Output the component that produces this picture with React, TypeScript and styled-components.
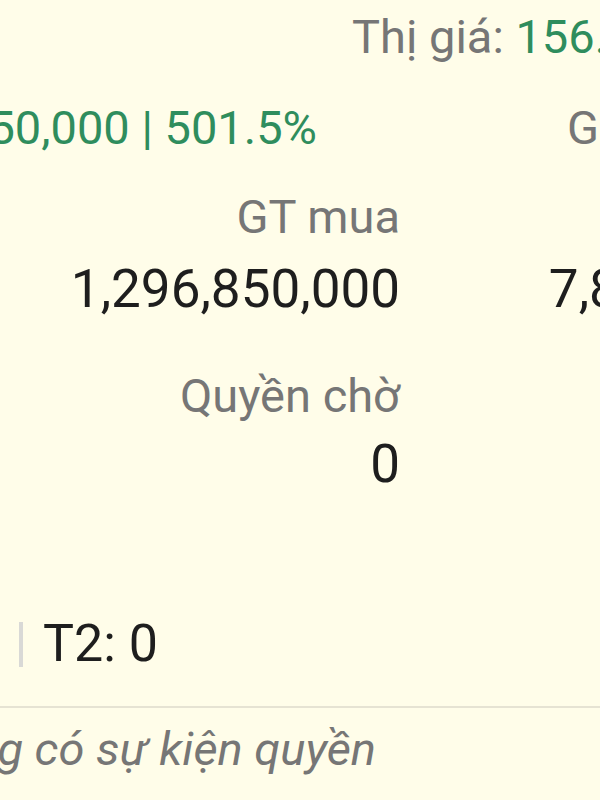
import React, { FC } from "react";
import styled, { createGlobalStyle } from "styled-components";

const GlobalStyle = createGlobalStyle`
  html, body {
    margin: 0;
    padding: 0;
    background: #fffde9;
  }
  body {
    font-family: Roboto, "Noto Sans", sans-serif;
    -webkit-font-smoothing: antialiased;
  }
`;

const Screen = styled.div`
  width: 600px;
  height: 800px;
  overflow: hidden;
  background: #fffde9;
  color: #212121;
  white-space: nowrap;
`;

const Header = styled.section`
  padding-top: 9px;
  display: flex;
  flex-direction: column;
  gap: 35px;
`;

const HeaderRow = styled.div<{ $indent?: number }>`
  display: flex;
  align-items: baseline;
  font-size: 47px;
  line-height: 56px;
  padding-left: ${(p) => p.$indent ?? 0}px;
`;

const EndCell = styled.div<{ $width: number }>`
  flex: 0 0 ${(p) => p.$width}px;
  min-width: 0;
  display: flex;
  justify-content: flex-end;
`;

const Label = styled.span`
  color: #767676;
`;

const Green = styled.span`
  color: #2f8d5d;
`;

const SideInfo = styled.div`
  margin-left: 250px;
`;

const Stats = styled.section`
  margin-top: 33px;
  display: grid;
  grid-template-columns: 400px 478px;
  text-align: right;
`;

const StatLabel = styled.div<{ $gap?: number }>`
  font-size: 47px;
  line-height: 56px;
  color: #767676;
  margin-top: ${(p) => p.$gap ?? 0}px;
`;

const StatValue = styled.div<{ $gap?: number }>`
  font-size: 53px;
  line-height: 62px;
  color: #1e1e1e;
  margin-top: ${(p) => p.$gap ?? 0}px;
`;

const Settlement = styled.div`
  margin-top: 118px;
  width: 158px;
  display: flex;
  justify-content: flex-end;
  align-items: center;
  gap: 20px;
  font-size: 52px;
  line-height: 62px;
  color: #1e1e1e;
`;

const Bar = styled.span`
  flex: 0 0 4px;
  height: 45px;
  background: #d9d9d6;
`;

const Divider = styled.hr`
  margin: 31px 0 0;
  border: 0;
  height: 2px;
  background: #e6e3d3;
`;

const Events = styled.div`
  margin-top: 13px;
  width: 376px;
  display: flex;
  justify-content: flex-end;
  font-size: 47px;
  line-height: 56px;
  font-style: italic;
  color: #767676;
`;

const stats = [
  { label: "GT mua", value: "1,296,850,000", label2: "GT hiện tại", value2: "7,800,000,000" },
  { label: "Quyền chờ", value: "0", label2: "Lãi/lỗ", value2: "0" },
];

const settlement = ["T0: 0", "T1: 0", "T2: 0"];

const App: FC = () => (
  <>
    <GlobalStyle />
    <Screen>
      <Header>
        <HeaderRow $indent={352}>
          <Label>Thị giá:&nbsp;</Label>
          <Green>156.000</Green>
        </HeaderRow>
        <HeaderRow>
          <EndCell $width={317}>
            <Label>Lãi/lỗ:&nbsp;</Label>
            <Green>+1,078,650,000 | 501.5%</Green>
          </EndCell>
          <SideInfo>
            <Label>Giá vốn: 26.000</Label>
          </SideInfo>
        </HeaderRow>
      </Header>

      <Stats>
        {stats.map((s, i) => (
          <React.Fragment key={s.label}>
            <StatLabel $gap={i === 0 ? 0 : 48}>{s.label}</StatLabel>
            <StatLabel $gap={i === 0 ? 0 : 48}>{s.label2}</StatLabel>
            <StatValue $gap={i === 0 ? 13 : 9}>{s.value}</StatValue>
            <StatValue $gap={i === 0 ? 13 : 9}>{s.value2}</StatValue>
          </React.Fragment>
        ))}
      </Stats>

      <Settlement>
        {settlement.map((t, i) => (
          <React.Fragment key={t}>
            {i > 0 && <Bar />}
            <span>{t}</span>
          </React.Fragment>
        ))}
      </Settlement>

      <Divider />

      <Events>Không có sự kiện quyền</Events>
    </Screen>
  </>
);

export default App;
